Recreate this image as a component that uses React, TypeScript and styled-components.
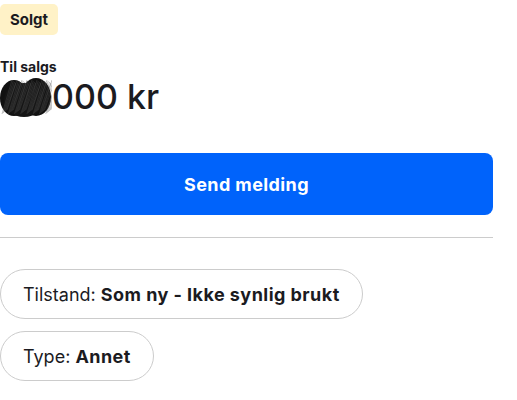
import React from "react";
import styled, { createGlobalStyle } from "styled-components";

const Global = createGlobalStyle`
  html, body { margin: 0; padding: 0; background: #fff; }
  body { font-family: Inter, "Noto Sans", Roboto, sans-serif; color: #1b1b1f; }
`;

const Page = styled.div`
  width: 493px;
  padding-top: 4px;
  display: flex;
  flex-direction: column;
`;

const Badge = styled.span`
  align-self: flex-start;
  display: inline-flex;
  align-items: center;
  height: 31px;
  padding: 0 10px;
  background: #fff2c7;
  border-radius: 5px;
  font-size: 15px;
  font-weight: 700;
  color: #1b1b1f;
`;

const Label = styled.div`
  margin-top: 22px;
  font-size: 14px;
  line-height: 20px;
  font-weight: 700;
`;

const Price = styled.div`
  display: flex;
  align-items: center;
  font-size: 34px;
  line-height: 40px;
  font-weight: 500;
`;

const Redact = styled.svg`
  width: 52px;
  height: 42px;
  margin: -2px 0 -2px 0;
  flex: none;
`;

const Button = styled.button`
  margin-top: 36px;
  height: 62px;
  border: none;
  border-radius: 8px;
  background: #0063fb;
  color: #fff;
  font-family: inherit;
  font-size: 18px;
  letter-spacing: 0.4px;
  font-weight: 700;
`;

const Divider = styled.hr`
  margin: 22px 0 0;
  border: none;
  border-top: 1px solid #cccccc;
`;

const Chips = styled.div`
  margin-top: 31px;
  display: flex;
  flex-direction: column;
  align-items: flex-start;
  gap: 12px;
`;

const Chip = styled.div`
  height: 50px;
  box-sizing: border-box;
  display: inline-flex;
  align-items: center;
  padding: 0 22px;
  border: 1px solid #cccccc;
  border-radius: 25px;
  font-size: 18px;
  font-weight: 400;
  white-space: pre;
`;

const Strong = styled.b`
  font-weight: 700;
  letter-spacing: 0.45px;
`;

const strokes = Array.from({ length: 40 }, (_, i) => {
  const x = 2 + i * 1.25;
  return `M${x} ${38 - (i % 5)} L${x + 10} ${4 + (i % 4)}`;
}).join(" ");

export default function App() {
  return (
    <>
      <Global />
      <Page>
        <Badge>Solgt</Badge>
        <Label>Til salgs</Label>
        <Price>
          <Redact viewBox="0 0 52 42">
            <ellipse cx="14" cy="22" rx="14" ry="18" fill="#111" />
            <ellipse cx="36" cy="21" rx="15" ry="19" fill="#111" />
            <ellipse cx="24" cy="24" rx="20" ry="17" fill="#151515" />
            <path d={strokes} stroke="#555" strokeWidth="0.6" fill="none" opacity="0.6" />
          </Redact>
          000 kr
        </Price>
        <Button>Send melding</Button>
        <Divider />
        <Chips>
          <Chip>
            Tilstand: <Strong>Som ny - Ikke synlig brukt</Strong>
          </Chip>
          <Chip>
            Type: <Strong>Annet</Strong>
          </Chip>
        </Chips>
      </Page>
    </>
  );
}
